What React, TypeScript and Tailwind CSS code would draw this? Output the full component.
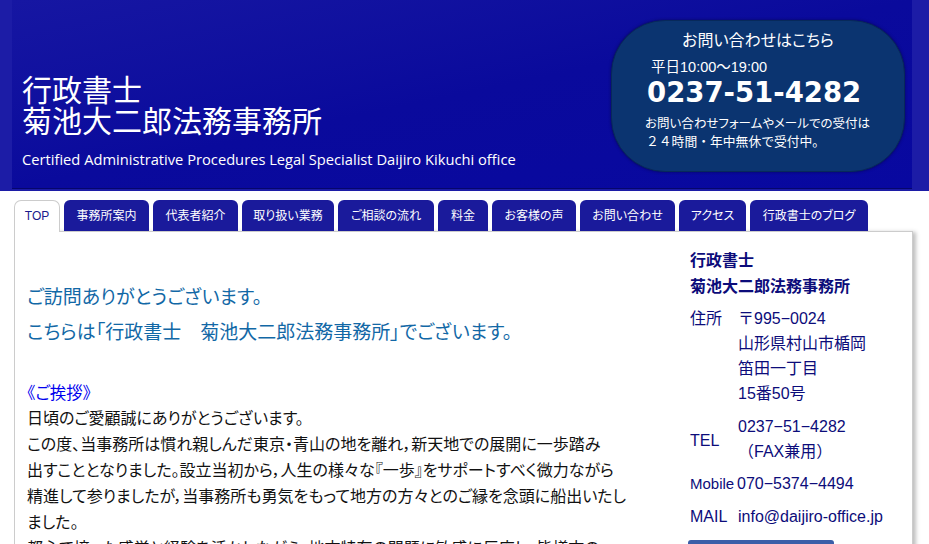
const tabs = [
  { label: "事務所案内", w: "w-[85px]" },
  { label: "代表者紹介", w: "w-[85px]" },
  { label: "取り扱い業務", w: "w-[92px]" },
  { label: "ご相談の流れ", w: "w-[96px]" },
  { label: "料金", w: "w-[50px]" },
  { label: "お客様の声", w: "w-[84px]" },
  { label: "お問い合わせ", w: "w-[95px]" },
  { label: "アクセス", w: "w-[67px]" },
  { label: "行政書士のブログ", w: "w-[118px]" },
];

const Header = () => (
  <header className="h-[191px] bg-[#1c1ca6] pl-[12px] pr-[17px]">
    <div className="flex h-[189px] justify-between border-b border-[#06066c] bg-gradient-to-br from-[#1616a2] via-[#0a0a9c] to-[#0808a0]">
      <div className="pl-[10px] pt-[75px] text-white">
        <h1 className="text-[30px] leading-[31px] font-normal">
          行政書士
          <br />
          菊池大二郎法務事務所
        </h1>
        <p className="mt-[13px] text-[14.7px] leading-[18px] font-['Open_Sans',sans-serif]">
          Certified Administrative Procedures Legal Specialist Daijiro Kikuchi office
        </p>
      </div>
      <div className="mt-[20px] mr-[7px] h-[152px] w-[294px] rounded-[54px] border border-[#07295a] bg-[#0b3470] text-white shadow-[0_0_3px_rgba(0,0,30,0.5)]">
        <p className="pt-[10px] text-center text-[16px] leading-[20px] [font-feature-settings:'palt']">
          お問い合わせはこちら
        </p>
        <p className="mt-[7px] pl-[39px] text-[14.5px] leading-[18px]">平日10:00～19:00</p>
        <p className="mt-[1px] pl-[35px] text-[27.5px] leading-[30px] font-bold font-['DejaVu_Sans',sans-serif]">
          0237-51-4282
        </p>
        <p className="mt-[8px] pl-[33px] text-[12.5px] leading-[18px] [font-feature-settings:'palt']">
          お問い合わせフォームやメールでの受付は
        </p>
        <p className="pl-[34px] text-[12.8px] leading-[18px]">２４時間・年中無休で受付中。</p>
      </div>
    </div>
  </header>
);

const Nav = () => (
  <nav className="mt-[9px] flex items-end gap-[4px] pl-[14px]">
    <div className="relative z-10 -mb-px flex h-[32px] w-[46px] items-center justify-center rounded-t-[7px] border border-b-0 border-[#cccccc] bg-white pb-[2px] text-[12px] text-[#1a1a8c]">
      TOP
    </div>
    {tabs.map((t) => (
      <div
        key={t.label}
        className={`${t.w} flex h-[31px] items-center justify-center rounded-t-[6px] bg-[#1a1a9b] text-[12px] text-white [font-feature-settings:'palt']`}
      >
        {t.label}
      </div>
    ))}
  </nav>
);

const Sidebar = () => (
  <aside className="w-[210px] pt-[16px] text-[16px] text-[#0c0c7a]">
    <p className="font-bold leading-[26px]">
      行政書士
      <br />
      菊池大二郎法務事務所
    </p>
    <div className="mt-[6px] flex leading-[25px]">
      <span className="w-[48px]">住所</span>
      <span>
        〒995−0024
        <br />
        山形県村山市楯岡
        <br />
        笛田一丁目
        <br />
        15番50号
      </span>
    </div>
    <div className="mt-[8px] flex items-center leading-[25px]">
      <span className="w-[48px] pt-[2px]">TEL</span>
      <span>
        0237−51−4282
        <br />
        （FAX兼用）
      </span>
    </div>
    <div className="mt-[7px] flex leading-[25px]">
      <span className="w-[47px] text-[15px]">Mobile</span>
      <span>070−5374−4494</span>
    </div>
    <div className="mt-[8px] flex leading-[25px]">
      <span className="w-[48px]">MAIL</span>
      <span>info@daijiro-office.jp</span>
    </div>
    <div className="mt-[11px] -ml-[2px] h-[20px] w-[146px] rounded-t-[3px] bg-[#3b5ea8]" />
  </aside>
);

export default function App() {
  return (
    <div className="h-[544px] w-[929px] overflow-hidden bg-white font-['Liberation_Sans','Noto_Sans_CJK_JP',sans-serif]">
      <Header />
      <Nav />
      <div className="ml-[14px] flex h-[400px] w-[899px] border border-[#cccccc] shadow-[4px_0_4px_-1px_rgba(0,0,0,0.25)]">
        <main className="w-[675px] pl-[12px] pt-[52px] [font-feature-settings:'palt']">
          <h2 className="text-[19px] leading-[28px] font-normal text-[#1268a6]">ご訪問ありがとうございます。</h2>
          <h2 className="mt-[7px] text-[19px] leading-[28px] font-normal text-[#1268a6]">
            こちらは「行政書士　菊池大二郎法務事務所」でございます。
          </h2>
          <h3 className="mt-[33px] text-[16.5px] leading-[26px] text-[#0000ee]">《ご挨拶》</h3>
          <p className="text-[16px] leading-[26px] text-[#111111]">
            日頃のご愛顧誠にありがとうございます。
            <br />
            この度、当事務所は慣れ親しんだ東京・青山の地を離れ，新天地での展開に一歩踏み
            <br />
            出すこととなりました。設立当初から，人生の様々な『一歩』をサポートすべく微力ながら
            <br />
            精進して参りましたが，当事務所も勇気をもって地方の方々とのご縁を念頭に船出いたし
            <br />
            ました。
            <br />
            都心で培った感覚と経験を活かしながら，地方特有の問題に敏感に反応し，皆様方の
          </p>
        </main>
        <Sidebar />
      </div>
    </div>
  );
}
